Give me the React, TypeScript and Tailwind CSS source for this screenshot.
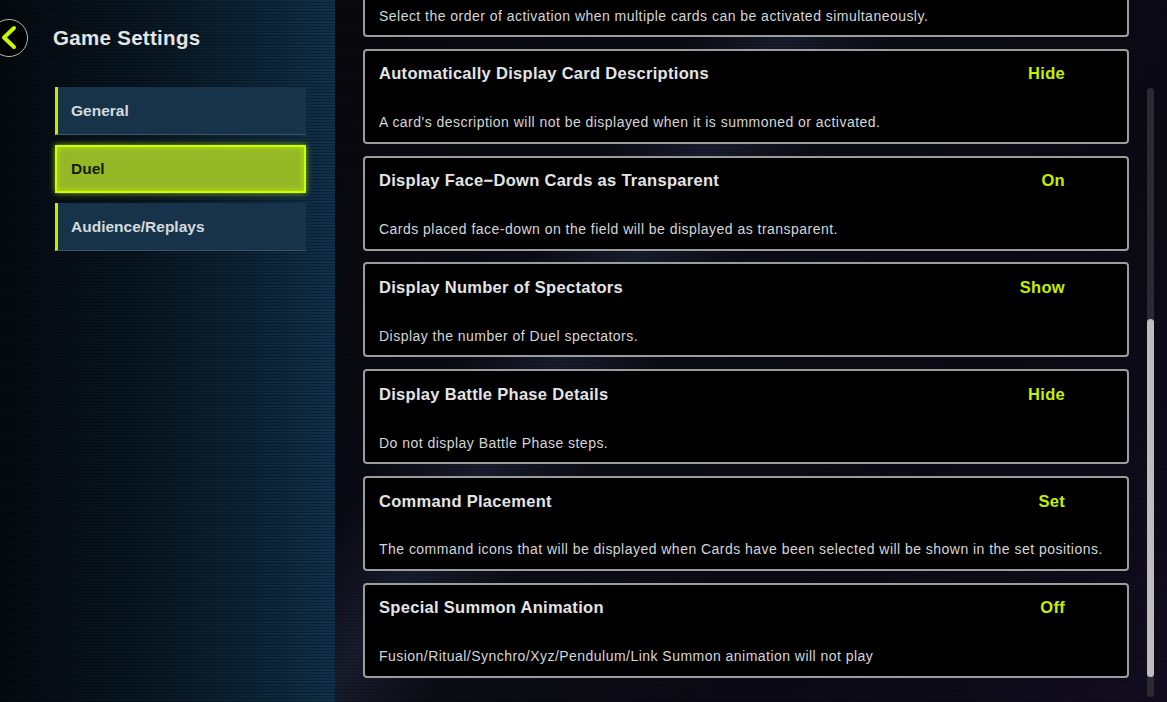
import React from "react";

type Item = { title: string; value: string; desc: string };

const items: Item[] = [
  { title: "Card Activation Order", value: "Manual", desc: "Select the order of activation when multiple cards can be activated simultaneously." },
  { title: "Automatically Display Card Descriptions", value: "Hide", desc: "A card's description will not be displayed when it is summoned or activated." },
  { title: "Display Face\u2212Down Cards as Transparent", value: "On", desc: "Cards placed face-down on the field will be displayed as transparent." },
  { title: "Display Number of Spectators", value: "Show", desc: "Display the number of Duel spectators." },
  { title: "Display Battle Phase Details", value: "Hide", desc: "Do not display Battle Phase steps." },
  { title: "Command Placement", value: "Set", desc: "The command icons that will be displayed when Cards have been selected will be shown in the set positions." },
  { title: "Special Summon Animation", value: "Off", desc: "Fusion/Ritual/Synchro/Xyz/Pendulum/Link Summon animation will not play" },
];

function Card({ item }: { item: Item }) {
  return (
    <div className="h-[95px] shrink-0 rounded-[4px] border-2 border-[#9c9c9c] bg-black flex flex-col justify-between pt-[12px] pb-[10px] pl-[14px]">
      <div className="flex items-center justify-between h-[22px]">
        <span className="text-[16.5px] font-bold text-[#e4e4e4] tracking-[0.3px]">{item.title}</span>
        <span className="mr-[62px] text-right text-[16.5px] font-bold text-[#c6ee00] tracking-[0.3px]">{item.value}</span>
      </div>
      <div className="h-[18px] flex items-center text-[14px] text-[#d6d6d6] tracking-[0.47px]">{item.desc}</div>
    </div>
  );
}

function MenuItem({ label, active }: { label: string; active?: boolean }) {
  if (active) {
    return (
      <div className="h-[48px] flex items-center pl-[14px] bg-[#95b826] border-2 border-[#ccff00] shadow-[0_0_6px_rgba(204,255,0,0.7),inset_0_0_6px_rgba(204,255,0,0.6)]">
        <span className="text-[15.5px] font-bold text-[#151a05]">{label}</span>
      </div>
    );
  }
  return (
    <div className="h-[48px] flex items-center pl-[13px] bg-[#17334a] border-l-[3px] border-l-[#c4ec00] border-b border-b-[#3b5566]">
      <span className="text-[15.5px] font-bold text-[#d3dade]">{label}</span>
    </div>
  );
}

export default function App() {
  return (
    <div
      className="w-[1167px] h-[702px] overflow-hidden flex"
      style={{ fontFamily: '"Liberation Sans", Arial, sans-serif' }}
    >
      <aside className="w-[335px] h-full shrink-0 bg-[repeating-linear-gradient(0deg,rgba(0,0,0,0.28)_0px,rgba(0,0,0,0.28)_1px,transparent_1px,transparent_3px),linear-gradient(90deg,#050a0f_0%,#081520_40%,#0c2436_75%,#10304a_100%)]">
        <div className="flex items-center gap-[25px] pt-[19px]">
          <div className="ml-[-10px] w-[38px] h-[38px] shrink-0 rounded-full border-[1.5px] border-[#b5b5b5] bg-black">
            <svg width="35" height="35" viewBox="0 0 35 35">
              <path d="M23 8 L13 17.5 L23 27" fill="none" stroke="#c8f500" strokeWidth="4" strokeLinecap="round" strokeLinejoin="round" />
            </svg>
          </div>
          <span className="text-[20.5px] font-bold text-[#e4e4e4] tracking-[0.3px]">Game Settings</span>
        </div>
        <nav className="mt-[30px] ml-[55px] w-[251px] flex flex-col gap-[10px]">
          <MenuItem label="General" />
          <MenuItem label="Duel" active />
          <MenuItem label="Audience/Replays" />
        </nav>
      </aside>
      <main className="flex-1 h-full flex bg-[repeating-linear-gradient(0deg,rgba(0,0,0,0.18)_0px,rgba(0,0,0,0.18)_1px,transparent_1px,transparent_3px),linear-gradient(125deg,#08080d_0%,#0a0a12_28%,#181c2d_36%,#0c0c15_44%,#0b0a14_70%,#120d20_100%)]">
        <div className="ml-[28px] w-[766px] flex flex-col gap-[11.8px] mt-[-58px]">
          {items.map((it) => (
            <Card key={it.title} item={it} />
          ))}
        </div>
        <div className="ml-[18px] w-[7px] mt-[88px] h-[609px] rounded-full bg-[#2a2a31] flex flex-col">
          <div className="mt-[231px] h-[358px] w-[7px] rounded-full bg-[#bdbdbd]" />
        </div>
      </main>
    </div>
  );
}
